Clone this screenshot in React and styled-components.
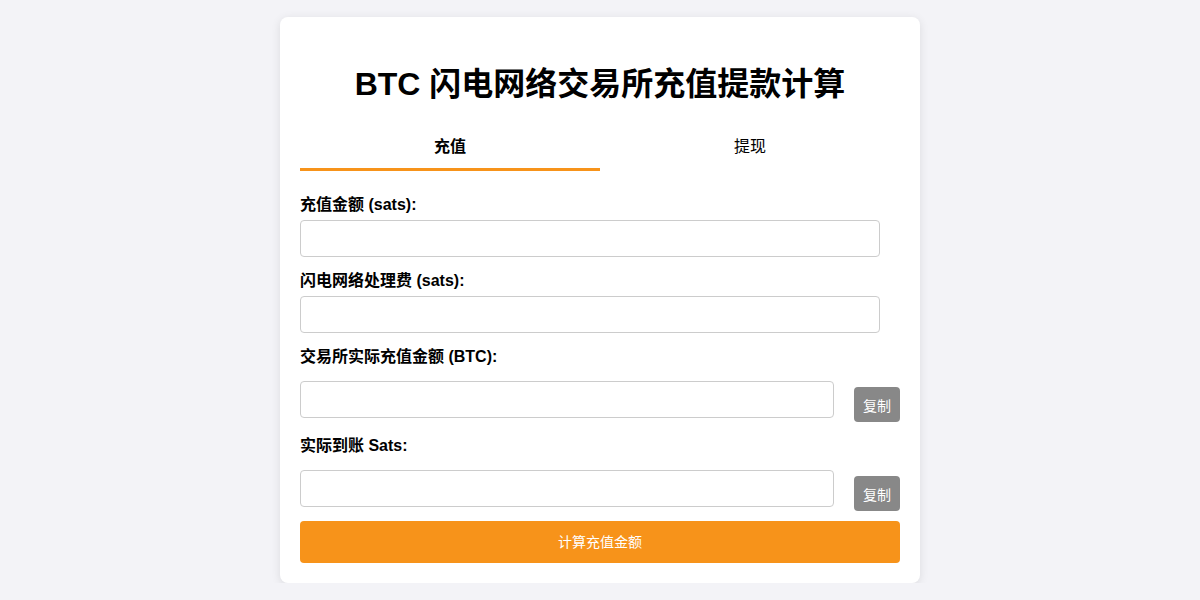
import React, { useState } from "react";
import styled, { createGlobalStyle } from "styled-components";

const GlobalStyle = createGlobalStyle`
  body {
    margin: 0;
    background: #f3f3f7;
    font-family: "Liberation Sans", Arial, "Noto Sans CJK SC", sans-serif;
    color: #000;
  }
`;

const Page = styled.div`
  display: flex;
  justify-content: center;
  padding-top: 17px;
`;

const Card = styled.div`
  width: 640px;
  box-sizing: border-box;
  padding: 20px;
  background: #fff;
  border-radius: 8px;
  box-shadow: 0 2px 10px rgba(0, 0, 0, 0.1);
`;

const Title = styled.h1`
  margin: 28px 0 24px;
  font-size: 32px;
  line-height: 38px;
  font-weight: bold;
  text-align: center;
`;

const Tabs = styled.div`
  display: flex;
  margin-bottom: 23px;
`;

const Tab = styled.button`
  flex: 1;
  padding: 10px 0 11px;
  border: none;
  border-bottom: 3px solid ${(p) => (p.$active ? "#f7931a" : "transparent")};
  background: none;
  font-family: inherit;
  font-size: 16px;
  line-height: 20px;
  font-weight: ${(p) => (p.$active ? "bold" : "normal")};
  color: #000;
  cursor: pointer;
`;

const FieldGroup = styled.div`
  margin-bottom: 13px;

  &:last-of-type {
    margin-bottom: 10px;
  }
`;

const Label = styled.label`
  display: block;
  margin-bottom: 6px;
  padding-top: 1px;
  font-size: 16px;
  line-height: 19px;
  font-weight: bold;
`;

const Input = styled.input`
  display: block;
  box-sizing: border-box;
  width: ${(p) => (p.$narrow ? "534px" : "580px")};
  height: 37px;
  padding: 8px;
  border: 1px solid #ccc;
  border-radius: 4px;
  font-family: inherit;
  font-size: 14px;
  outline: none;
`;

const Row = styled.div`
  display: flex;
  align-items: flex-start;
  gap: 20px;
  margin-top: 15px;
`;

const CopyButton = styled.button`
  width: 46px;
  height: 35px;
  margin-top: 6px;
  padding: 0;
  border: none;
  border-radius: 4px;
  background: #888;
  color: #fff;
  font-family: inherit;
  font-size: 14px;
  cursor: pointer;
`;

const CalcButton = styled.button`
  display: block;
  width: 100%;
  height: 42px;
  padding: 0 0 2px;
  border: none;
  border-radius: 4px;
  background: #f7931a;
  color: #fff;
  font-family: inherit;
  font-size: 14px;
  cursor: pointer;
`;

const App = () => {
  const [tab, setTab] = useState("deposit");

  return (
    <>
      <GlobalStyle />
      <Page>
        <Card>
          <Title>BTC 闪电网络交易所充值提款计算</Title>
          <Tabs>
            <Tab $active={tab === "deposit"} onClick={() => setTab("deposit")}>
              充值
            </Tab>
            <Tab $active={tab === "withdraw"} onClick={() => setTab("withdraw")}>
              提现
            </Tab>
          </Tabs>

          <FieldGroup>
            <Label>充值金额 (sats):</Label>
            <Input type="number" />
          </FieldGroup>
          <FieldGroup>
            <Label>闪电网络处理费 (sats):</Label>
            <Input type="number" />
          </FieldGroup>
          <FieldGroup>
            <Label>交易所实际充值金额 (BTC):</Label>
            <Row>
              <Input $narrow readOnly />
              <CopyButton>复制</CopyButton>
            </Row>
          </FieldGroup>
          <FieldGroup>
            <Label>实际到账 Sats:</Label>
            <Row>
              <Input $narrow readOnly />
              <CopyButton>复制</CopyButton>
            </Row>
          </FieldGroup>

          <CalcButton>计算充值金额</CalcButton>
        </Card>
      </Page>
    </>
  );
};

export default App;
